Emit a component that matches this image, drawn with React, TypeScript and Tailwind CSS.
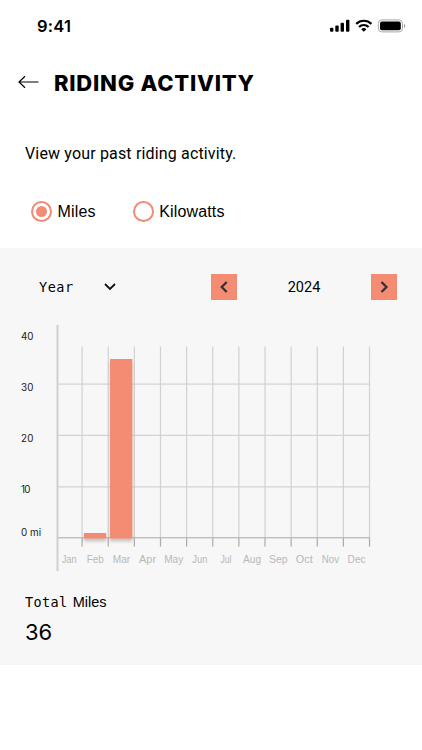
import React from 'react';

const months = ['Jan', 'Feb', 'Mar', 'Apr', 'May', 'Jun', 'Jul', 'Aug', 'Sep', 'Oct', 'Nov', 'Dec'];

const monthWidths = [15, 17, 17.5, 17, 19, 15, 11, 18, 18.5, 17, 17.5, 18];

const bars = [
  { month: 1, top: 213, height: 5.5 },
  { month: 2, top: 39, height: 179.5 },
];

const yLabels = [
  { text: '40', y: 19.5, width: 12.5 },
  { text: '30', y: 70.7, width: 12.5 },
  { text: '20', y: 121.8, width: 12.5 },
  { text: '10', y: 173.3, width: 9.5 },
  { text: '0 mi', y: 216.2, width: 20 },
];

const StatusBar = () => {
  return (
    <div className="flex h-[52px] items-center justify-between pl-[37px] pr-[16px]">
      <span className="font-['Inter',sans-serif] text-[16.5px] font-semibold leading-none tracking-[0.2px]">9:41</span>
      <svg width="76" height="14" viewBox="0 0 76 14">
        <rect x="0" y="8.8" width="3.4" height="4" rx="1" />
        <rect x="5.3" y="6.5" width="3.4" height="6.3" rx="1" />
        <rect x="10.6" y="3.8" width="3.4" height="9" rx="1" />
        <rect x="16" y="0.8" width="3.4" height="12" rx="1" />
        <g fill="none" stroke="#000" strokeWidth="2.2">
          <path d="M26.2 4.9a10.8 10.8 0 0 1 15.2 0" />
          <path d="M29 8a6.8 6.8 0 0 1 9.6 0" />
        </g>
        <path d="M33.8 12.8l-2.6-2.6a3.7 3.7 0 0 1 5.2 0z" />
        <rect x="48.3" y="0.9" width="24.2" height="12" rx="3.6" fill="none" stroke="#a8a8a8" />
        <rect x="50" y="2.6" width="20.8" height="8.6" rx="2" />
        <path d="M74 5v4c1.7-.7 1.7-3.3 0-4z" fill="#999" />
      </svg>
    </div>
  );
};

const Radio = ({ label, checked }: { label: string; checked?: boolean }) => {
  return (
    <div className="flex items-center gap-[5.6px]">
      <span className="flex size-[21px] items-center justify-center rounded-full border-2 border-[#ef8b75]">
        {checked && <span className="size-[11px] rounded-full bg-[#f48b73]" />}
      </span>
      <span className="font-['Liberation_Sans',sans-serif] text-base leading-5 tracking-[0.14px]">{label}</span>
    </div>
  );
};

const StepButton = ({ d }: { d: string }) => {
  return (
    <button className="flex size-[26px] items-center justify-center bg-[#f48b73]">
      <svg width="26" height="26" fill="none" stroke="#303036" strokeWidth="2.2">
        <path d={d} />
      </svg>
    </button>
  );
};

const Chart = () => {
  return (
    <svg width="422" height="256" viewBox="0 0 422 256" className="block font-['Inter',sans-serif]">
      <defs>
        <filter id="barShadow" x="-30%" y="-10%" width="160%" height="400%">
          <feDropShadow dx="0" dy="3" stdDeviation="1.5" floodColor="#000" floodOpacity="0.2" />
        </filter>
      </defs>
      {/* grid */}
      {months.map((m, i) => (
        <g key={m}>
          <rect x={81.5 + i * 26.13} y="26.5" width="1.2" height="191" fill="#d2d2d2" />
          <rect x={81.5 + i * 26.13} y="217.5" width="1.2" height="9" fill="#aaa" />
        </g>
      ))}
      {[63.5, 114.8, 166.3].map((y) => (
        <rect key={y} x="57" y={y} width="313" height="1.2" fill="#d2d2d2" />
      ))}
      <rect x="57" y="217" width="313" height="1.4" fill="#bebebe" />
      <rect x="56.5" y="5" width="2" height="246" fill="#d0d0d0" />
      {bars.map((b) => (
        <rect
          key={b.month}
          x={57.8 + b.month * 26.13}
          y={b.top}
          width="22.3"
          height={b.height}
          fill="#f48b73"
          filter="url(#barShadow)"
        />
      ))}
      {yLabels.map((l) => (
        <text key={l.text} x="21" y={l.y} textLength={l.width} fontSize="9.8" fill="#202020">
          {l.text}
        </text>
      ))}
      {months.map((m, i) => (
        <text
          key={m}
          x={69.2 + i * 26.13}
          y="243.3"
          textAnchor="middle"
          textLength={monthWidths[i]}
          lengthAdjust="spacingAndGlyphs"
          fontSize="10"
          fill="#b8b8b8"
          className="font-['Liberation_Sans',sans-serif]"
        >
          {m}
        </text>
      ))}
    </svg>
  );
};

const App = () => {
  return (
    <div className="h-[750px] w-[422px] overflow-hidden bg-white font-['Roboto',sans-serif] text-black">
      <StatusBar />
      <div className="flex h-[62px] items-center gap-[15px] pl-[18px]">
        <svg width="21" height="14" fill="none" stroke="#000" strokeWidth="1.2" className="-mt-0.5">
          <path d="M20.5 7H1M7 1.2L1 7l6 5.8" />
        </svg>
        <h1 className="font-['Inter',sans-serif] text-[22px] font-extrabold leading-none tracking-[0.76px]">
          RIDING ACTIVITY
        </h1>
      </div>
      <p className="mt-7 pl-[25px] text-base leading-6 tracking-[0.16px]">View your past riding activity.</p>
      <div className="mt-[35px] flex gap-[37px] pl-[31px]">
        <Radio label="Miles" checked />
        <Radio label="Kilowatts" />
      </div>

      <div className="mt-[26px] h-[417px] bg-[#f7f7f7] pt-[26px]">
        <div className="flex items-center pl-[39px] pr-[25px]">
          <div className="flex w-[172px] items-center">
            <span className="w-[65px] font-['DejaVu_Sans_Mono',monospace] text-[13.5px] tracking-[0.5px]">Year</span>
            <svg width="12" height="8" fill="none" stroke="#111" strokeWidth="1.8">
              <path d="M1 1l5 5 5-5" />
            </svg>
          </div>
          <StepButton d="M15.7 8l-5 5 5 5" />
          <span className="flex-1 pt-0.5 text-center text-[14.5px]">2024</span>
          <StepButton d="M10.5 8l5 5-5 5" />
        </div>
        <div className="mt-5">
          <Chart />
        </div>
        <div className="pl-[25px] pt-4">
          <div className="flex items-baseline gap-[5px] leading-5">
            <span className="font-['DejaVu_Sans_Mono',monospace] text-[13.5px] tracking-[0.4px]">Total</span>
            <span className="font-['Liberation_Sans',sans-serif] text-[14.5px]">Miles</span>
          </div>
          <div className="mt-1.5 font-['Inter',sans-serif] text-[22px] leading-7">36</div>
        </div>
      </div>
    </div>
  );
};

export default App;
